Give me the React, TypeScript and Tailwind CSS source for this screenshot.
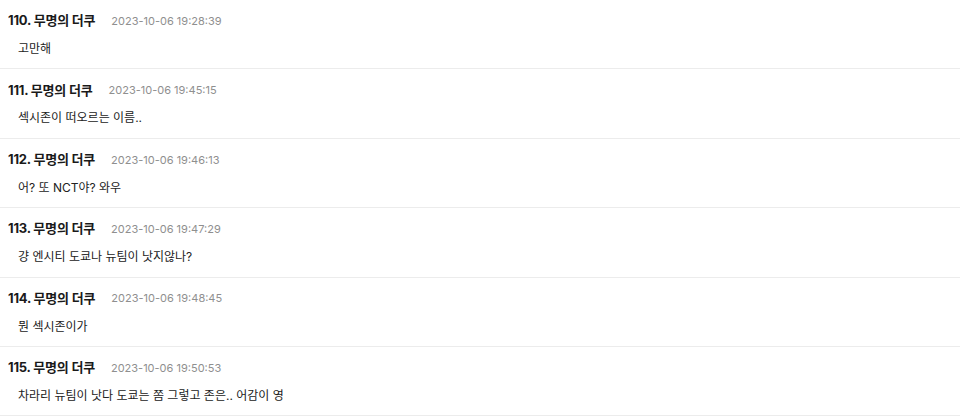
import React from "react";

const rows = [
  { n: "110.", date: "2023-10-06 19:28:39", body: "고만해" },
  { n: "111.", date: "2023-10-06 19:45:15", body: "섹시존이 떠오르는 이름.." },
  { n: "112.", date: "2023-10-06 19:46:13", body: "어? 또 NCT야? 와우" },
  { n: "113.", date: "2023-10-06 19:47:29", body: "걍 엔시티 도쿄나 뉴팀이 낫지않나?" },
  { n: "114.", date: "2023-10-06 19:48:45", body: "뭔 섹시존이가" },
  { n: "115.", date: "2023-10-06 19:50:53", body: "차라리 뉴팀이 낫다 도쿄는 쫌 그렇고 존은.. 어감이 영" },
];

export default function App() {
  return (
    <div
      className="w-[960px] h-[416px] overflow-hidden bg-white text-[#222]"
      style={{ fontFamily: "Inter, 'Noto Sans CJK KR', sans-serif" }}
    >
      {rows.map((r) => (
        <div key={r.n} className="border-b border-[#ececec] pt-[12px] pb-[9.4px]">
          <div className="flex items-center h-[18px] pl-[8px]">
            <span className="text-[13px] font-bold text-[#1a1a1a] tracking-[-0.2px]">
              {r.n} 무명의 더쿠
            </span>
            <span className="ml-[16px] text-[11px] text-[#8f8f8f]">{r.date}</span>
          </div>
          <div className="mt-[9px] h-[20px] flex items-center pl-[18px] text-[12px] text-[#222]">
            {r.body}
          </div>
        </div>
      ))}
    </div>
  );
}
